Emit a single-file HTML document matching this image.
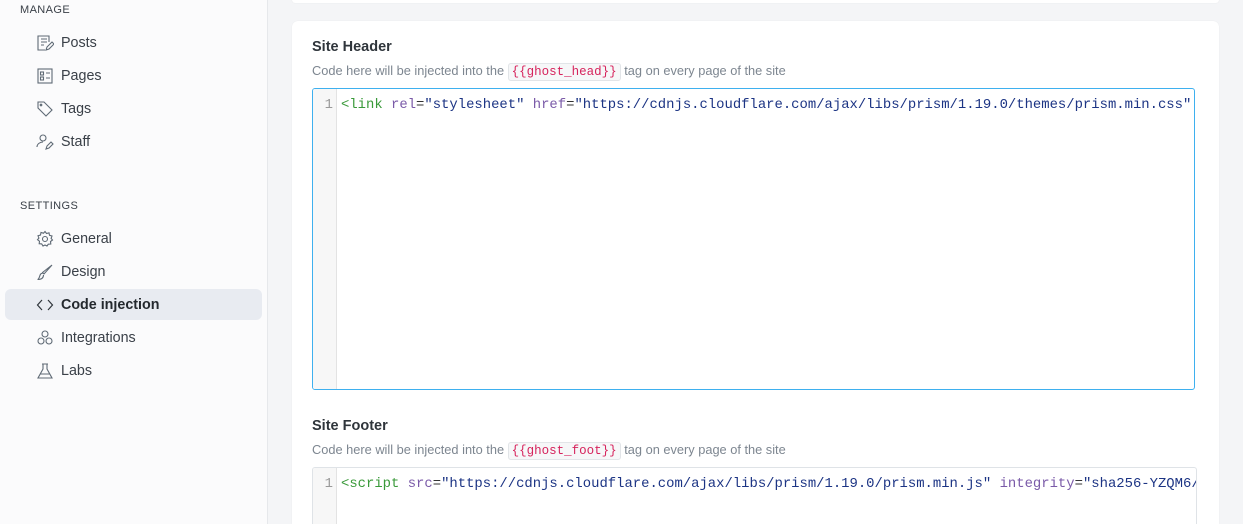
<!DOCTYPE html>
<html style="width:1243px;height:524px;overflow:hidden"><head><meta charset="utf-8"><style>
*{box-sizing:border-box;margin:0;padding:0}
body{width:1243px;height:524px;overflow:hidden;background:#f4f5f7;font-family:"Liberation Sans",sans-serif;position:relative}
.side{position:absolute;left:0;top:0;width:268px;height:524px;background:#fbfbfc;border-right:1px solid #e6e8eb}
.hd{position:absolute;left:20px;font-size:11px;letter-spacing:.4px;color:#3a4048}
.it{position:absolute;left:5px;width:257px;height:31px;border-radius:6px;font-size:14.3px;color:#3a4048;line-height:33px;padding-left:56px}
.it svg{position:absolute;left:31px;top:7px}
.it.act{background:#e8ebf1;font-weight:bold;color:#24292e}
.card{position:absolute;left:292px;top:21px;width:927px;height:503px;background:#fff;border-radius:6px 6px 0 0;box-shadow:0 0 1px rgba(0,0,0,.08);overflow:hidden}
.top{position:absolute;left:292px;top:0;width:927px;height:3px;background:#fff;border-radius:0 0 6px 6px;box-shadow:0 0 1px rgba(0,0,0,.1)}
h3{position:absolute;left:20px;font-size:14.5px;font-weight:bold;color:#2f353b}
.desc{position:absolute;left:20px;font-size:12.8px;color:#7d8690}
.desc code{font-family:"Liberation Mono",monospace;color:#d6235c;background:#f6f7f8;border:1px solid #e2e5e8;border-radius:3px;padding:1px 3px;font-size:12.5px}
.ed{position:absolute;left:20px;width:883px;border:1px solid #dfe3e7;border-radius:3px;overflow:hidden;background:#fff}
.ed.f{border-color:#3eb0ef}
.gut{position:absolute;left:0;top:0;bottom:0;width:24px;background:#f7f7f7;border-right:1px solid #e3e3e3;text-align:right;padding-right:3px;font-family:"Liberation Mono",monospace;font-size:13.9px;color:#999;padding-top:8px}
.ln{position:absolute;left:28px;top:8px;white-space:pre;font-family:"Liberation Mono",monospace;font-size:13.9px;color:#333}
.t{color:#3a9a3a}.a{color:#7a5aa8}.s{color:#1c3484}
</style></head><body>
<div class="side">
<div class="hd" style="top:4px">MANAGE</div>
<div class="it" style="top:27px"><svg width="18" height="18" viewBox="0 0 18 18" fill="none" stroke="#5f6a75" stroke-width="1.1"><path d="M13 8V2H2v14h7M5 5h6M5 8h6M5 11h3M10 16l1-3 5-5 2 2-5 5z"/></svg>Posts</div>
<div class="it" style="top:60px"><svg width="18" height="18" viewBox="0 0 18 18" fill="none" stroke="#5f6a75" stroke-width="1.1"><rect x="2" y="2" width="14" height="14"/><rect x="4.5" y="5" width="3" height="3"/><rect x="4.5" y="10" width="3" height="3"/><path d="M10 6h4M10 11h4"/></svg>Pages</div>
<div class="it" style="top:93px"><svg width="18" height="18" viewBox="0 0 18 18" fill="none" stroke="#5f6a75" stroke-width="1.1"><path d="M2 2h6l8 8-6 6-8-8z"/><circle cx="5" cy="5" r=".8"/></svg>Tags</div>
<div class="it" style="top:126px"><svg width="18" height="18" viewBox="0 0 18 18" fill="none" stroke="#5f6a75" stroke-width="1.1"><circle cx="7" cy="5" r="3"/><path d="M1 14c0-3 3-5 6-5M10 16l1-3 4-4 2 2-4 4z"/></svg>Staff</div>
<div class="hd" style="top:200px">SETTINGS</div>
<div class="it" style="top:223px"><svg width="18" height="18" viewBox="0 0 18 18" fill="none" stroke="#5f6a75" stroke-width="1.1"><circle cx="9" cy="9" r="2.5"/><path d="M9 1.5l1.5 2 2.5-.7.5 2.5 2.5.7-.9 2.4 1.4 1.6-2 1.5.3 2.5-2.5.2L11 16l-2-1-2 1-1.3-2.1-2.5-.2.3-2.5-2-1.5 1.4-1.6-.9-2.4 2.5-.7.5-2.5 2.5.7z"/></svg>General</div>
<div class="it" style="top:256px"><svg width="18" height="18" viewBox="0 0 18 18" fill="none" stroke="#5f6a75" stroke-width="1.1"><path d="M16 2L8 11l-1.5-1.5zM6.5 10.5C4 10 4 13 3 15c-.5 1 -1 1.5-1.5 1.5 3 0 6-1 6-4.5"/></svg>Design</div>
<div class="it act" style="top:289px"><svg width="18" height="18" viewBox="0 0 18 18" fill="none" stroke="#2f353b" stroke-width="1.2"><path d="M6 4L1.5 9 6 14M12 4l4.5 5L12 14"/></svg>Code injection</div>
<div class="it" style="top:322px"><svg width="18" height="18" viewBox="0 0 18 18" fill="none" stroke="#5f6a75" stroke-width="1.1"><circle cx="9" cy="5" r="3"/><circle cx="5" cy="12" r="3"/><circle cx="13" cy="12" r="3"/></svg>Integrations</div>
<div class="it" style="top:355px"><svg width="18" height="18" viewBox="0 0 18 18" fill="none" stroke="#5f6a75" stroke-width="1.1"><path d="M6 2h6M7 2v5l-5 9h14l-5-9V2M4 12h10"/></svg>Labs</div>
</div>
<div class="top"></div>
<div class="card">
<h3 style="top:18px">Site Header</h3>
<div class="desc" style="top:42px">Code here will be injected into the <code>{{ghost_head}}</code> tag on every page of the site</div>
<div class="ed f" style="top:67px;height:302px"><div class="gut">1</div><div class="ln"><span class="t">&lt;link</span> <span class="a">rel</span>=<span class="s">"stylesheet"</span> <span class="a">href</span>=<span class="s">"https://cdnjs.cloudflare.com/ajax/libs/prism/1.19.0/themes/prism.min.css"</span></div></div>
<h3 style="top:397px">Site Footer</h3>
<div class="desc" style="top:421px">Code here will be injected into the <code>{{ghost_foot}}</code> tag on every page of the site</div>
<div class="ed" style="top:446px;height:57px;width:885px;border-bottom:none;border-radius:3px 3px 0 0"><div class="gut">1</div><div class="ln"><span class="t">&lt;script</span> <span class="a">src</span>=<span class="s">"https://cdnjs.cloudflare.com/ajax/libs/prism/1.19.0/prism.min.js"</span> <span class="a">integrity</span>=<span class="s">"sha256-YZQM6/hLBZYkb01VYf3bOn7qUIdXEBz7XqhUZ5O+vEM="</span></div></div>
</div>
</body></html>
